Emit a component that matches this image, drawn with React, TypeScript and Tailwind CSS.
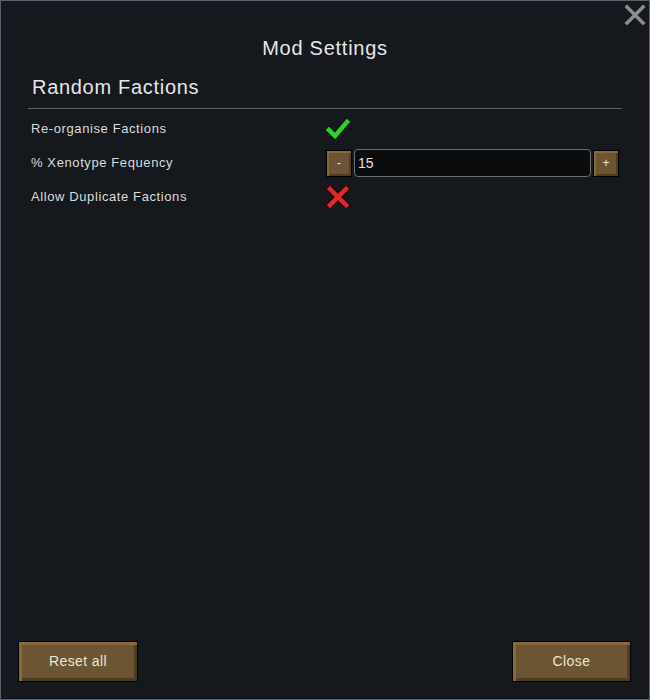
import React from "react";

const font = { fontFamily: '"Liberation Sans", Arial, sans-serif' };

function Check() {
    return (
        <svg width="24" height="22" viewBox="0 0 24 22">
            <path d="M3 12 L9 18 L21 4" fill="none" stroke="#0b1a0b" strokeWidth="7" strokeLinejoin="miter" strokeLinecap="square" />
            <path d="M3 12 L9 18 L21 4" fill="none" stroke="#2fd12f" strokeWidth="4.5" strokeLinejoin="miter" strokeLinecap="square" />
        </svg>
    );
}

function Cross() {
    return (
        <svg width="24" height="22" viewBox="0 0 24 22">
            <path d="M4 3 L20 19 M20 3 L4 19" fill="none" stroke="#1a0a0a" strokeWidth="7" strokeLinecap="square" />
            <path d="M4 3 L20 19 M20 3 L4 19" fill="none" stroke="#e3282a" strokeWidth="4.5" strokeLinecap="square" />
        </svg>
    );
}

function BrownButton({ label, className }: { label: string; className: string }) {
    return (
        <button
            className={`border border-black bg-[#6b5532] text-[#ece6d8] tracking-[0.4px] shadow-[inset_3px_3px_0_#87693c,inset_-3px_-3px_0_#4e3d22] ${className}`}
        >
            {label}
        </button>
    );
}

export default function App() {
    return (
        <main style={font} className="relative w-[650px] h-[700px] border border-[#56616d] bg-[#15181d] flex flex-col text-[#dcdcdc]">
            <button className="absolute top-[3px] right-[2px] w-[24px] h-[22px]">
                <svg width="24" height="22" viewBox="0 0 24 22">
                    <path d="M4 3 L20 19 M20 3 L4 19" stroke="#8b8d8f" strokeWidth="3.5" strokeLinecap="square" />
                </svg>
            </button>

            <h1 className="mt-[33px] text-center text-[20px] leading-[28px] tracking-[0.75px] text-[#e6e6e6]">Mod Settings</h1>

            <div className="mx-[27px] mt-[11px] border-b border-[#5b5e62] pb-[7px]">
                <h2 className="pl-[4px] text-[20px] leading-[28px] tracking-[0.7px] text-[#e6e6e6]">Random Factions</h2>
            </div>

            <div className="mt-[3px] px-[30px] flex flex-col text-[13px] tracking-[0.6px]">
                <div className="h-[34px] flex items-center">
                    <span className="w-[295px]">Re-organise Factions</span>
                    <Check />
                </div>
                <div className="h-[34px] flex items-center">
                    <span className="w-[295px]">% Xenotype Fequency</span>
                    <div className="flex items-center gap-[2px] tracking-normal">
                        <button className="w-[26px] h-[27px] border border-black bg-[#6b5532] text-[12px] text-[#ece6d8] shadow-[inset_2px_2px_0_#87693c,inset_-2px_-2px_0_#4e3d22]">-</button>
                        <div className="w-[237px] h-[28px] rounded-[4px] border border-[#6d6f72] bg-[#0b0c0e] pl-[3px] flex items-center text-[14px] text-[#e0e0e0]">15</div>
                        <button className="w-[26px] h-[27px] border border-black bg-[#6b5532] text-[12px] text-[#ece6d8] shadow-[inset_2px_2px_0_#87693c,inset_-2px_-2px_0_#4e3d22]">+</button>
                    </div>
                </div>
                <div className="h-[34px] flex items-center">
                    <span className="w-[295px]">Allow Duplicate Factions</span>
                    <Cross />
                </div>
            </div>

            <div className="mt-auto mb-[17px] pl-[17px] pr-[18px] flex justify-between text-[14px]">
                <BrownButton label="Reset all" className="w-[120px] h-[41px]" />
                <BrownButton label="Close" className="w-[119px] h-[41px]" />
            </div>
        </main>
    );
}
